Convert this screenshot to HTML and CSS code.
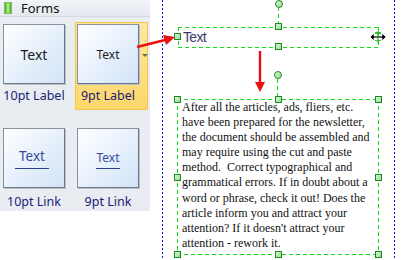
FILE: index.html
```html
<!DOCTYPE html>
<html lang="en">
<head>
    <meta charset="UTF-8">
    <title>Forms</title>
    <link rel="stylesheet" href="styles.css">
</head>
<body>
    <div class="page">
        <aside class="panel">
            <div class="panel-head">
                <span class="head-icon"></span>
                <span class="head-title">Forms</span>
            </div>
            <div class="gallery">
                <div class="item">
                    <div class="tile"><span class="tile-text big">Text</span></div>
                    <div class="caption">10pt Label</div>
                </div>
                <div class="item selected">
                    <div class="tile"><span class="tile-text">Text</span></div>
                    <div class="caption">9pt Label</div>
                    <span class="more"></span>
                </div>
                <div class="item">
                    <div class="tile"><span class="tile-link big">Text</span></div>
                    <div class="caption">10pt Link</div>
                </div>
                <div class="item">
                    <div class="tile"><span class="tile-link">Text</span></div>
                    <div class="caption">9pt Link</div>
                </div>
            </div>
        </aside>

        <main class="canvas">
            <div class="guide guide-left"></div>
            <div class="guide guide-right"></div>

            <!-- label shape -->
            <span class="rotate" style="left:125px;top:0px"></span>
            <span class="stem" style="left:128px;top:7px;height:17px"></span>
            <div class="shape label-shape">Text</div>
            <span class="handle" style="left:24px;top:33px"></span>
            <span class="handle" style="left:125px;top:23px"></span>
            <span class="handle" style="left:125px;top:43px"></span>

            <!-- text block shape -->
            <span class="rotate" style="left:124px;top:71px"></span>
            <span class="stem" style="left:127px;top:79px;height:18px"></span>
            <div class="shape text-shape">After all the articles, ads, fliers, etc.<br>have been prepared for the newsletter,<br>the document should be assembled and<br>may require using the cut and paste<br>method.&nbsp; Correct typographical and<br>grammatical errors. If in doubt about a<br>word or phrase, check it out! Does the<br>article inform you and attract your<br>attention? If it doesn't attract your<br>attention - rework it.</div>
            <span class="handle" style="left:24px;top:96px"></span>
            <span class="handle" style="left:125px;top:96px"></span>
            <span class="handle" style="left:225px;top:96px"></span>
            <span class="handle" style="left:24px;top:174px"></span>
            <span class="handle" style="left:225px;top:174px"></span>
            <span class="handle" style="left:24px;top:251px"></span>
            <span class="handle" style="left:125px;top:251px"></span>
            <span class="handle" style="left:225px;top:251px"></span>
        </main>

        <svg class="overlay" width="402" height="260" viewBox="0 0 402 260">
            <!-- drag arrow into canvas -->
            <line x1="137" y1="47" x2="165" y2="40" stroke="#e81010" stroke-width="2.4"/>
            <polygon points="175,37 163,35 166,45" fill="#e81010"/>
            <!-- arrow down to text block -->
            <line x1="260" y1="51" x2="260" y2="83" stroke="#e81010" stroke-width="2.4"/>
            <polygon points="255,82 265,82 260,92" fill="#e81010"/>
            <!-- resize cursor -->
            <g transform="translate(378,37)">
                <path d="M-8 0 L-4 -4 L-4 -1 L4 -1 L4 -4 L8 0 L4 4 L4 1 L-4 1 L-4 4 Z" fill="#000" stroke="#fff" stroke-width="0.8"/>
                <rect x="-3" y="-5" width="6" height="2" fill="#3ac43a"/>
                <rect x="-0.5" y="-6" width="1" height="12" fill="#1a9a1a"/>
                <rect x="-3" y="3" width="6" height="1" fill="#3ac43a"/>
            </g>
        </svg>
    </div>
</body>
</html>
```

FILE: styles.css
```css
body {
    margin: 0;
    background: #fff;
}
.page {
    position: relative;
    display: flex;
    width: 402px;
    height: 260px;
    overflow: hidden;
}
.panel {
    width: 150px;
    height: 211px;
    background: #e9ecf0;
    font-family: "Noto Sans", "Open Sans", sans-serif;
}
.panel-head {
    display: flex;
    align-items: center;
    gap: 9px;
    height: 16px;
    padding-left: 4px;
    background: linear-gradient(#f1f4f8, #e4e9ef);
    border-bottom: 1px solid #d3d9e2;
    font-size: 13px;
    color: #111;
}
.head-icon {
    width: 8px;
    height: 12px;
    background: linear-gradient(90deg, #4fa82a, #b6f08a 50%, #4fa82a);
    border: 1px solid #7cc25a;
    box-sizing: border-box;
}
.gallery {
    display: grid;
    grid-template-columns: 74px 73px;
    grid-auto-rows: 88px;
    row-gap: 16px;
    padding: 5px 0 0 1px;
}
.item {
    position: relative;
    display: flex;
    flex-direction: column;
    padding: 2px 0 0 2px;
}
.item.selected {
    background: linear-gradient(#fde7a4, #fcd86a);
    box-shadow: inset 0 0 0 1px #f3c846;
}
.tile {
    width: 62px;
    height: 60px;
    box-sizing: border-box;
    border: 1px solid #8a929e;
    border-right-color: #6d7684;
    border-bottom-color: #6d7684;
    box-shadow: 1px 1px 0 #b9c1cc;
    background: linear-gradient(135deg, #ffffff, #e3eefb 60%, #d3e3f6);
    display: flex;
    align-items: center;
    justify-content: center;
}
.tile-text {
    font-size: 12px;
    color: #1b1b1b;
}
.tile-text.big {
    font-size: 14px;
}
.tile-link {
    font-size: 12px;
    color: #3a4a9a;
    padding-bottom: 3px;
    border-bottom: 1px solid #2e3f8c;
    line-height: 15px;
    margin-top: 2px;
}
.tile-link.big {
    font-size: 13.5px;
    padding: 0 4px 4px;
    margin-left: -4px;
}
.caption {
    width: 62px;
    margin-top: 3px;
    text-align: center;
    font-size: 12.5px;
    color: #1c1c78;
}
.item:nth-child(n+3) .caption {
    margin-top: 5px;
}
.more {
    position: absolute;
    left: 67px;
    top: 32px;
    width: 0;
    height: 0;
    border-left: 3px solid transparent;
    border-right: 3px solid transparent;
    border-top: 3px solid #6a6a6a;
}
.canvas {
    position: relative;
    flex: 1;
    height: 260px;
}
.guide {
    position: absolute;
    top: 0;
    width: 1px;
    height: 260px;
    background: repeating-linear-gradient(#1010e0 0 2px, transparent 2px 4px);
}
.guide-left {
    left: 12px;
}
.guide-right {
    left: 244px;
}
.shape {
    position: absolute;
    box-sizing: border-box;
    background:
        repeating-linear-gradient(90deg, #10e010 0 4px, transparent 4px 7px) top left / 100% 1px no-repeat,
        repeating-linear-gradient(90deg, #10e010 0 4px, transparent 4px 7px) bottom left / 100% 1px no-repeat,
        repeating-linear-gradient(#10e010 0 4px, transparent 4px 7px) top left / 1px 100% no-repeat,
        repeating-linear-gradient(#10e010 0 4px, transparent 4px 7px) top right / 1px 100% no-repeat;
}
.label-shape {
    left: 28px;
    top: 27px;
    width: 201px;
    height: 21px;
    padding-left: 5px;
    font-family: "Liberation Sans", Arial, sans-serif;
    font-size: 14px;
    line-height: 20px;
    letter-spacing: -0.7px;
    color: #3c3c6c;
}
.text-shape {
    left: 27px;
    top: 99px;
    width: 202px;
    height: 156px;
    padding: 1px 0 0 5px;
    font-family: "Liberation Serif", "Times New Roman", serif;
    font-size: 12px;
    line-height: 15.1px;
    white-space: nowrap;
    color: #111;
}
.stem {
    position: absolute;
    width: 1px;
    background: repeating-linear-gradient(#10e010 0 4px, transparent 4px 7px);
}
.handle,
.rotate {
    position: absolute;
    width: 7px;
    height: 7px;
    box-sizing: border-box;
    border: 1px solid #1a8a1a;
    background: linear-gradient(135deg, #d8f6d8, #96dc96);
}
.rotate {
    width: 8px;
    height: 8px;
    border-radius: 50%;
}
.overlay {
    position: absolute;
    left: 0;
    top: 0;
}
```
